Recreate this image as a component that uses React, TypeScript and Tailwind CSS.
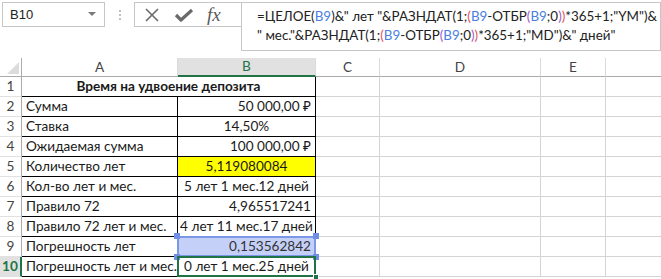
import React from "react";

const gridCols = "grid-cols-[22px_156px_138px_64px_161px_65px_55px]";

type Row = { n: number; a: string; b: string; bAlign: "left" | "right" | "center"; special?: string };

const rows: Row[] = [
  { n: 2, a: "Сумма", b: "50 000,00 ₽", bAlign: "right" },
  { n: 3, a: "Ставка", b: "14,50%", bAlign: "center" },
  { n: 4, a: "Ожидаемая сумма", b: "100 000,00 ₽", bAlign: "right" },
  { n: 5, a: "Количество лет", b: "5,119080084", bAlign: "center", special: "yellow" },
  { n: 6, a: "Кол-во лет и мес.", b: "5 лет 1 мес.12 дней", bAlign: "center" },
  { n: 7, a: "Правило 72", b: "4,965517241", bAlign: "right" },
  { n: 8, a: "Правило 72 лет и мес.", b: "4 лет 11 мес.17 дней", bAlign: "center" },
  { n: 9, a: "Погрешность лет", b: "0,153562842", bAlign: "right", special: "blue" },
  { n: 10, a: "Погрешность лет и мес.", b: "0 лет 1 мес.25 дней", bAlign: "center", special: "green" },
];

const B = () => <span className="text-[#4a7fe0]">B9</span>;
const R = ({ c }: { c: string }) => <span className="text-[#e0525c]">{c}</span>;
const P = ({ c }: { c: string }) => <span className="text-[#a259c4]">{c}</span>;

function Handle({ pos }: { pos: string }) {
  return <div className={`absolute w-[6px] h-[6px] bg-[#6f8fe6] ${pos}`} />;
}

export default function App() {
  const font = { fontFamily: "Lato, 'Noto Sans', sans-serif" };
  return (
    <div className="w-[661px] h-[279px] bg-white overflow-hidden relative" style={font}>
      {/* Top bar */}
      <div className="flex h-[58px] items-start pt-[2px]">
        <div className="ml-[2px] w-[103px] h-[25px] border border-[#c6c6c6] flex items-center justify-between pl-[7px] pr-[8px] text-[13px] text-[#222]" style={{ fontFamily: "'Liberation Sans', sans-serif" }}>
          <span>B10</span>
          <svg width="8" height="5" viewBox="0 0 8 5"><path d="M0 0 L8 0 L4 4 Z" fill="#7a7a7a" /></svg>
        </div>
        <div className="w-[29px] h-[25px] flex flex-col items-center justify-center gap-[2px]">
          <div className="w-[2px] h-[2px] bg-[#c0c0c0]" />
          <div className="w-[2px] h-[2px] bg-[#c0c0c0]" />
          <div className="w-[2px] h-[2px] bg-[#c0c0c0]" />
        </div>
        <div className="w-[107px] h-[25px] border border-r-0 border-[#c6c6c6] flex items-center">
          <svg className="ml-[9px]" width="16" height="16" viewBox="0 0 16 16">
            <path d="M2 2 L14 14 M14 2 L2 14" stroke="#6a6a6a" strokeWidth="1.6" />
          </svg>
          <svg className="ml-[14px]" width="20" height="16" viewBox="0 0 20 16">
            <path d="M2 8 L7 13 L18 3" stroke="#6a6a6a" strokeWidth="3.2" fill="none" strokeLinejoin="round" />
          </svg>
          <span className="ml-[13px] text-[#5a5a5a] italic text-[19px] leading-none" style={{ fontFamily: "'Liberation Serif', serif" }}>fx</span>
        </div>
        <div className="flex-1 h-[49px] border border-[#c6c6c6] pl-[15px] pt-[4px] text-[13.4px] leading-[19px] text-[#222] whitespace-nowrap overflow-hidden">
          <div>
            =ЦЕЛОЕ(<B />)&amp;" лет "&amp;РАЗНДАТ(1;<R c="(" /><B />-ОТБР<P c="(" /><B />;0<P c=")" /><R c=")" />*365+1;"YM")&amp;
          </div>
          <div>
            " мес."&amp;РАЗНДАТ(1;<R c="(" /><B />-ОТБР<P c="(" /><B />;0<P c=")" /><R c=")" />*365+1;"MD")&amp;" дней"
          </div>
        </div>
      </div>

      {/* Sheet */}
      <div className={`grid ${gridCols} text-[13.6px] text-[#1a1a1a]`}>
        {/* header row */}
        <div className="h-[19px] border-r border-b border-[#ababab] bg-white relative">
          <svg className="absolute right-[2px] bottom-[2px]" width="12" height="12" viewBox="0 0 12 12"><path d="M12 0 L12 12 L0 12 Z" fill="#dcdcdc" /></svg>
        </div>
        <div className="h-[19px] border-r border-b border-r-[#dadada] border-b-[#ababab] flex items-center justify-center text-[#444]">A</div>
        <div className="h-[19px] bg-[#e1e1e1] border-r border-r-[#dadada] border-b-2 border-b-[#217346] flex items-center justify-center text-[#217346]">B</div>
        <div className="h-[19px] border-r border-b border-r-[#dadada] border-b-[#ababab] flex items-center justify-center text-[#444]">C</div>
        <div className="h-[19px] border-r border-b border-r-[#dadada] border-b-[#ababab] flex items-center justify-center text-[#444]">D</div>
        <div className="h-[19px] border-r border-b border-r-[#dadada] border-b-[#ababab] flex items-center justify-center text-[#444]">E</div>
        <div className="h-[19px] border-b border-[#ababab]" />

        {/* row 1 */}
        <div className="h-[20px] border-r border-b border-r-[#ababab] border-b-[#e1e1e1] flex items-center justify-center text-[#444]">1</div>
        <div className="col-span-2 h-[20px] border-r border-b border-black flex items-center justify-center font-bold">Время на удвоение депозита</div>
        <div className="h-[20px] border-r border-b border-[#d4d4d4]" />
        <div className="h-[20px] border-r border-b border-[#d4d4d4]" />
        <div className="h-[20px] border-r border-b border-[#d4d4d4]" />
        <div className="h-[20px] border-b border-[#d4d4d4]" />

        {rows.map((r) => {
          const sel = r.special === "green";
          return (
            <React.Fragment key={r.n}>
              <div
                className={`h-[20px] border-b flex items-center justify-center ${
                  sel
                    ? "bg-[#e1e1e1] text-[#217346] font-bold border-r-2 border-r-[#217346] border-b-[#e1e1e1]"
                    : "border-r border-r-[#ababab] border-b-[#e1e1e1] text-[#444]"
                }`}
              >
                {r.n}
              </div>
              <div className="h-[20px] border-r border-b border-black flex items-center pl-[4px] whitespace-nowrap overflow-hidden">{r.a}</div>
              <div
                className={`h-[20px] border-r border-b border-black flex items-center whitespace-nowrap relative ${
                  r.bAlign === "right" ? "justify-end pr-[4px]" : r.bAlign === "center" ? "justify-center" : "justify-start pl-[4px]"
                } ${r.special === "yellow" ? "bg-[#ffff00]" : ""} ${r.special === "blue" ? "bg-[#c5d0f8] text-[#333]" : ""}`}
              >
                {r.special === "blue" && (
                  <>
                    <div className="absolute inset-[-1px] border-2 border-[#7b98e8] pointer-events-none" />
                    <Handle pos="left-[-4px] top-[-4px]" />
                    <Handle pos="right-[-4px] top-[-4px]" />
                    <Handle pos="left-[-4px] bottom-[-4px]" />
                    <Handle pos="right-[-4px] bottom-[-4px]" />
                  </>
                )}
                {sel && (
                  <>
                    <div className="absolute left-[-1px] top-[-1px] right-[-1px] bottom-[-1px] border-2 border-[#217346] pointer-events-none" />
                    <div className="absolute right-[-4px] bottom-[-4px] w-[6px] h-[6px] bg-[#217346] border border-white" />
                  </>
                )}
                <span className="relative">{r.b}</span>
              </div>
              <div className="h-[20px] border-r border-b border-[#d4d4d4]" />
              <div className="h-[20px] border-r border-b border-[#d4d4d4]" />
              <div className="h-[20px] border-r border-b border-[#d4d4d4]" />
              <div className="h-[20px] border-b border-[#d4d4d4]" />
            </React.Fragment>
          );
        })}
      </div>
    </div>
  );
}
